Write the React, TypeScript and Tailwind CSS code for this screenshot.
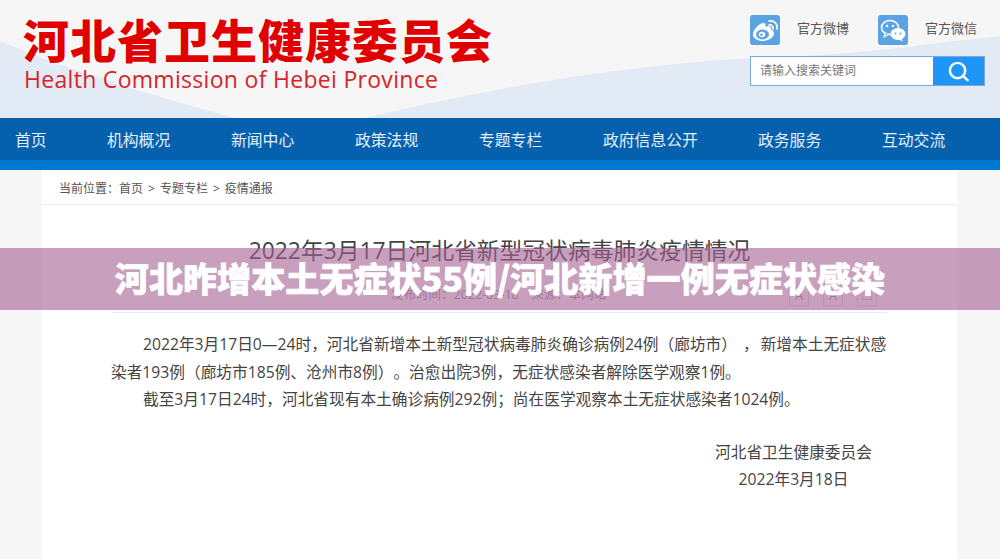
import React from 'react';

const navItems = ['首页', '机构概况', '新闻中心', '政策法规', '专题专栏', '政府信息公开', '政务服务', '互动交流'];

function WeiboIcon() {
  return (
    <svg viewBox="0 0 30 30" className="h-[30px] w-[30px] rounded-[3px] bg-[#5ba3e3]">
      <path d="M3 19.500C3 15 8 9 13 8c2.500-.4 3 1.500 2.300 3.800 2.800-1 6-.8 6 1.600 0 .7-.2 1-.1 1.300 1.500.6 2.800 1.700 2.800 3.600 0 4-5.500 7.700-11 7.700C7.500 26 3 23.500 3 19.500z" fill="#fff" />
      <ellipse cx="12.500" cy="19.500" rx="6.500" ry="5" fill="#5ba3e3" />
      <ellipse cx="12" cy="19.500" rx="3.200" ry="2.800" fill="#fff" />
      <circle cx="11.500" cy="19.800" r="1.300" fill="#5ba3e3" />
      <path d="M19 10c2.500-.5 4.500 1.500 4 4M19 6c5-1 9 3 8 8" fill="none" stroke="#fff" strokeWidth="1.700" strokeLinecap="round" />
    </svg>
  );
}

function WechatIcon() {
  return (
    <svg viewBox="0 0 30 30" className="h-[30px] w-[30px] rounded-[3px] bg-[#5ba3e3]">
      <ellipse cx="12" cy="12.500" rx="8.500" ry="7" fill="none" stroke="#fff" strokeWidth="1.500" />
      <path d="M7 18.500l-1 3.500 4.500-2.500" fill="#5ba3e3" stroke="#fff" strokeWidth="1.200" />
      <ellipse cx="20" cy="19" rx="7.500" ry="6" fill="#fff" />
      <path d="M23.500 23.500l1.500 3-4.500-2z" fill="#fff" />
      <circle cx="9" cy="11" r="1.200" fill="#fff" />
      <circle cx="15" cy="11" r="1.200" fill="#fff" />
      <circle cx="17.500" cy="18.500" r="1" fill="#5ba3e3" />
      <circle cx="22.500" cy="18.500" r="1" fill="#5ba3e3" />
    </svg>
  );
}

export default function App() {
  return (
    <div lang="zh-CN" className="relative h-[559px] w-[1000px] overflow-hidden bg-[#f6f6f6] [font-family:'Open_Sans','Noto_Sans_CJK_SC',sans-serif] [text-spacing-trim:space-all]">
      <header className="relative flex h-[118px] justify-between overflow-hidden bg-[#f6f6f6]">
        {/* background waves */}
        <svg viewBox="0 0 1000 118" className="absolute inset-0 h-[118px] w-[1000px]">
          <path d="M0 41C80 75 170 100 235 118H0z" fill="#e2ebf5" />
          <path d="M365 118C500 85 650 62 760 58 860 55 940 42 1000 36V118z" fill="#e2ebf5" />
        </svg>
        <div className="relative pl-[23px] pt-[15px]">
          <div className="text-[46px] leading-[50px] font-black tracking-[1px] whitespace-nowrap text-[#e00000] [text-shadow:0_0_3px_white]">
            河北省卫生健康委员会
          </div>
          <div className="pl-[1px] text-[23px] leading-[28px] tracking-[0.3px] whitespace-nowrap text-[#d8232a]">
            Health Commission of Hebei Province
          </div>
        </div>
        <div className="relative mr-[15px] w-[235px] pt-[15px]">
          <div className="flex items-center">
            <WeiboIcon />
            <span className="ml-[17px] -mt-[2px] w-[81px] text-[13px] text-[#555]">官方微博</span>
            <WechatIcon />
            <span className="ml-[17px] -mt-[2px] text-[13px] whitespace-nowrap text-[#555]">官方微信</span>
          </div>
          <div className="mt-[11px] flex h-[30px] border border-[#7ba9d8] bg-white">
            <div className="flex flex-1 items-center pb-[1px] pl-[9px] text-[12px] text-[#777]">请输入搜索关键词</div>
            <div className="flex w-[51px] items-center justify-center bg-[#1e96f8]">
              <svg viewBox="0 0 24 24" className="h-[23px] w-[23px]" fill="none" stroke="#fff" strokeWidth="2.600" strokeLinecap="round">
                <circle cx="11" cy="11" r="8" />
                <path d="M17 17l4.500 4" />
              </svg>
            </div>
          </div>
        </div>
      </header>

      <nav className="h-[42px] bg-[#0560ae]">
        <ul className="flex h-full items-center pl-[15px] pt-[3px] text-[15.800px] text-[#e6f0f8]">
          {navItems.map((item, i) => (
            <li key={item} className={`shrink-0 ${i === 0 ? 'w-[92px]' : i === 5 ? 'w-[155px]' : 'w-[124px]'}`}>
              {item}
            </li>
          ))}
        </ul>
      </nav>
      <div className="h-[10px] bg-[#0079d2]" />

      <main className="ml-[42px] h-[389px] w-[915px] bg-white">
        <div className="flex h-[35px] items-center border-b border-[#ececec] pl-[17px] pt-[3px] text-[12px] text-[#555]">
          当前位置：首页<span className="mx-[5px]">&gt;</span>专题专栏<span className="mx-[5px]">&gt;</span>疫情通报
        </div>
        <h1 className="mt-[32px] text-center text-[22.800px] leading-[28px] text-[#444]">
          2022年3月17日河北省新型冠状病毒肺炎疫情情况
        </h1>
        <div className="mx-[70px] mt-[14px] flex h-[34px] items-center justify-between border-b border-[#ececec] pl-[279px] pr-[10px] text-[12.500px] text-[#999]">
          <span>发布时间：2022-03-18　来源：本网站</span>
          <span className="flex gap-[14px]">
            <span className="flex h-[20px] w-[20px] items-center justify-center border border-[#ddd] text-[12px]">A</span>
            <span className="flex h-[20px] w-[20px] items-center justify-center border border-[#ddd] text-[12px]">A</span>
            <span className="flex h-[20px] w-[20px] items-center justify-center border border-[#ddd] text-[12px]">□</span>
          </span>
        </div>
        <div className="ml-[69px] mt-[18px] w-[780px] text-[15.700px] leading-[27.500px] text-[#444]">
          <p className="indent-[32px]">2022年3月17日0—24时，河北省新增本土新型冠状病毒肺炎确诊病例24例（廊坊市）<span className="ml-[6px] mr-[2px]">，</span>新增本土无症状感染者193例（廊坊市185例、沧州市8例）。治愈出院3例，无症状感染者解除医学观察1例。</p>
          <p className="indent-[32px]">截至3月17日24时，河北省现有本土确诊病例292例；尚在医学观察本土无症状感染者1024例。</p>
        </div>
        <div className="mt-[25px] ml-[663px] w-[177px] text-center text-[15.700px] leading-[27px] text-[#444]">
          <p>河北省卫生健康委员会</p>
          <p>2022年3月18日</p>
        </div>
      </main>

      <div className="absolute inset-x-0 top-[248px] flex h-[62px] items-center justify-center bg-[#a36193]/60">
        <span className="-mt-[2px] text-[34.100px] font-black whitespace-nowrap text-white [font-family:'Noto_Sans_CJK_SC',sans-serif] [-webkit-text-stroke:0.6px_white]">
          河北昨增本土无症状55例/河北新增一例无症状感染
        </span>
      </div>
    </div>
  );
}
